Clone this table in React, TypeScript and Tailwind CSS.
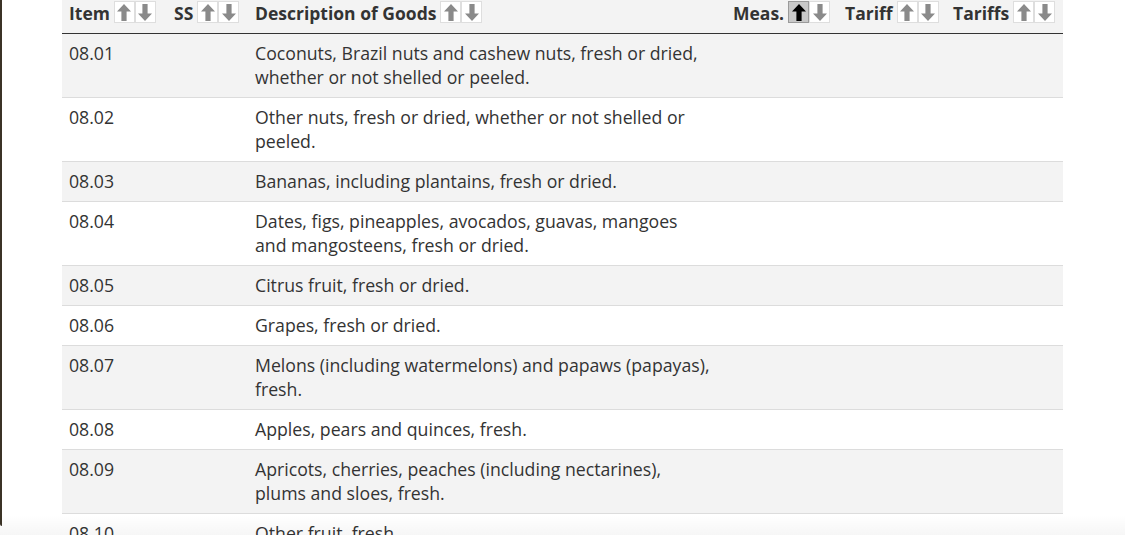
import React from "react";

const rows: { item: string; lines: string[] }[] = [
  { item: "08.01", lines: ["Coconuts, Brazil nuts and cashew nuts, fresh or dried,", "whether or not shelled or peeled."] },
  { item: "08.02", lines: ["Other nuts, fresh or dried, whether or not shelled or", "peeled."] },
  { item: "08.03", lines: ["Bananas, including plantains, fresh or dried."] },
  { item: "08.04", lines: ["Dates, figs, pineapples, avocados, guavas, mangoes", "and mangosteens, fresh or dried."] },
  { item: "08.05", lines: ["Citrus fruit, fresh or dried."] },
  { item: "08.06", lines: ["Grapes, fresh or dried."] },
  { item: "08.07", lines: ["Melons (including watermelons) and papaws (papayas),", "fresh."] },
  { item: "08.08", lines: ["Apples, pears and quinces, fresh."] },
  { item: "08.09", lines: ["Apricots, cherries, peaches (including nectarines),", "plums and sloes, fresh."] },
  { item: "08.10", lines: ["Other fruit, fresh."] },
];

function Arrow({ down, active }: { down?: boolean; active?: boolean }) {
  return (
    <span
      className={
        "flex h-[22px] w-[21px] items-center justify-center border " +
        (active ? "border-[#9a9a9a] bg-[#c8c8c8]" : "border-[#dedede] bg-white")
      }
    >
      <svg width="14" height="17" viewBox="0 0 14 17" className={down ? "rotate-180" : ""}>
        <path d="M7 0 L14 7.5 L9.6 7.5 L9.6 17 L4.4 17 L4.4 7.5 L0 7.5 Z" fill={active ? "#000" : "#8a8a8a"} />
      </svg>
    </span>
  );
}

function Head({ label, active, className }: { label: string; active?: boolean; className: string }) {
  return (
    <div className={"flex items-start pl-[7px] pt-[1px] " + className}>
      <span className="text-[17.5px] font-bold leading-[24px] text-[#333]">{label}</span>
      <span className="ml-[4px] flex">
        <Arrow active={active} />
        <Arrow down />
      </span>
    </div>
  );
}

export default function App() {
  return (
    <div
      className="relative h-[535px] w-[1125px] overflow-hidden bg-white"
      style={{ fontFamily: '"Open Sans", "Noto Sans", sans-serif' }}
    >
      <div className="absolute left-0 top-0 h-[526px] w-[2px] rounded-bl-[3px] bg-[#3b3326]" />
      <div className="ml-[62px] w-[1001px]">
        <div className="flex h-[34px] border-b border-[#333] bg-[#f3f3f3]">
          <Head label="Item" className="w-[105px]" />
          <Head label="SS" className="w-[81px]" />
          <Head label="Description of Goods" className="w-[478px]" />
          <Head label="Meas." active className="w-[112px]" />
          <Head label="Tariff" className="w-[108px]" />
          <Head label="Tariffs" className="flex-1" />
        </div>
        {rows.map((r, i) => (
          <div
            key={r.item}
            className={
              "flex border-b border-[#dcdcdc] pb-[8px] pt-[7px] text-[17.7px] leading-[24px] text-[#333] " +
              (i % 2 === 0 ? "bg-[#f3f3f3]" : "bg-white")
            }
          >
            <div className="w-[105px] pl-[7px]">{r.item}</div>
            <div className="w-[81px]" />
            <div className="w-[478px] whitespace-nowrap pl-[7px]">
              {r.lines.map((l, j) => (
                <div key={j}>{l}</div>
              ))}
            </div>
          </div>
        ))}
      </div>
      <div className="pointer-events-none absolute bottom-0 left-0 h-[20px] w-full bg-gradient-to-b from-transparent to-[rgba(0,0,0,0.035)]" />
    </div>
  );
}
